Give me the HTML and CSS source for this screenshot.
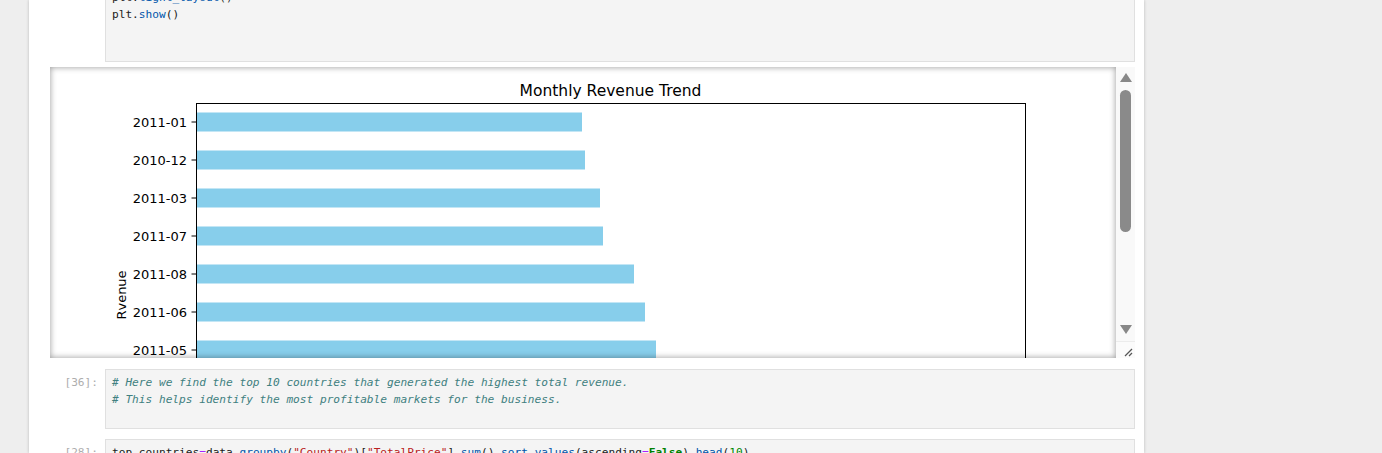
FILE: index.html
```html
<!DOCTYPE html>
<html>
<head>
<meta charset="utf-8">
<link rel="stylesheet" href="styles.css">
</head>
<body>
<div class="notebook">
  <div class="cell cell-first">
    <div class="prompt"></div>
    <div class="input input-first"><pre class="code">plt.<span class="pr">tight_layout</span>()
plt.<span class="pr">show</span>()</pre></div>
  </div>

  <div class="output">
    <div class="output-view">
      <svg class="chart" width="1066" height="291" viewBox="0 0 1066 291" xmlns="http://www.w3.org/2000/svg">
        <rect x="0" y="0" width="1066" height="291" fill="#ffffff"/>
        <text class="title" x="560.5" y="29" text-anchor="middle">Monthly Revenue Trend</text>
        <g fill="#87ceeb">
          <rect x="146.5" y="45.5" width="385.5" height="19"/>
          <rect x="146.5" y="83.5" width="388.5" height="19"/>
          <rect x="146.5" y="121.5" width="403.5" height="19"/>
          <rect x="146.5" y="159.5" width="406.5" height="19"/>
          <rect x="146.5" y="197.5" width="437.5" height="19"/>
          <rect x="146.5" y="235.5" width="448.5" height="19"/>
          <rect x="146.5" y="273.5" width="459.5" height="19"/>
        </g>
        <g stroke="#000" stroke-width="1">
          <line x1="146.5" y1="36.5" x2="146.5" y2="300"/>
          <line x1="146" y1="36.5" x2="976" y2="36.5"/>
          <line x1="975.5" y1="36.5" x2="975.5" y2="300"/>
          <line x1="141.5" y1="55" x2="146.5" y2="55"/>
          <line x1="141.5" y1="93" x2="146.5" y2="93"/>
          <line x1="141.5" y1="131" x2="146.5" y2="131"/>
          <line x1="141.5" y1="169" x2="146.5" y2="169"/>
          <line x1="141.5" y1="207" x2="146.5" y2="207"/>
          <line x1="141.5" y1="245" x2="146.5" y2="245"/>
          <line x1="141.5" y1="283" x2="146.5" y2="283"/>
        </g>
        <g class="tick" text-anchor="end">
          <text x="137" y="59.7">2011-01</text>
          <text x="137" y="97.7">2010-12</text>
          <text x="137" y="135.7">2011-03</text>
          <text x="137" y="173.7">2011-07</text>
          <text x="137" y="211.7">2011-08</text>
          <text x="137" y="249.7">2011-06</text>
          <text x="137" y="287.7">2011-05</text>
        </g>
        <text class="tick" x="0" y="0" text-anchor="middle" transform="translate(75.5 228) rotate(-90)">Rvenue</text>
      </svg>
    </div>
    <div class="scrollbar">
      <div class="sb-btn sb-up"><span class="tri-up"></span></div>
      <div class="sb-track"><div class="sb-thumb"></div></div>
      <div class="sb-btn sb-down"><span class="tri-down"></span></div>
      <div class="resizer">
        <svg width="19" height="17" viewBox="0 0 19 17" xmlns="http://www.w3.org/2000/svg">
          <line x1="9" y1="15" x2="16" y2="8" stroke="#555" stroke-width="1.2"/>
          <line x1="13" y1="15" x2="16" y2="12" stroke="#555" stroke-width="1.2"/>
        </svg>
      </div>
    </div>
  </div>

  <div class="cell cell-second">
    <div class="prompt">[36]:</div>
    <div class="input"><pre class="code"><span class="cm"># Here we find the top 10 countries that generated the highest total revenue.</span>
<span class="cm"># This helps identify the most profitable markets for the business.</span></pre></div>
  </div>

  <div class="cell cell-third">
    <div class="prompt">[28]:</div>
    <div class="input"><pre class="code">top_countries<span class="op">=</span>data.<span class="pr">groupby</span>(<span class="st">"Country"</span>)[<span class="st">"TotalPrice"</span>].<span class="pr">sum</span>().<span class="pr">sort_values</span>(ascending<span class="op">=</span><span class="kw">False</span>).<span class="pr">head</span>(<span class="nu">10</span>)</pre></div>
  </div>
</div>
</body>
</html>
```
FILE: styles.css
```css
html, body {
  margin: 0;
  padding: 0;
}
body {
  background: #eeeeee;
  width: 1382px;
  height: 453px;
  overflow: hidden;
}
.notebook {
  margin-left: 29px;
  width: 1115px;
  height: 453px;
  overflow: hidden;
  background: #ffffff;
  box-shadow: 0 0 3px rgba(0, 0, 0, 0.22);
}
.cell {
  display: flex;
  padding-right: 9px;
}
.cell-first {
  margin-top: -16px;
}
.cell-second {
  margin-top: 11px;
}
.cell-third {
  margin-top: 10px;
}
.prompt {
  width: 69px;
  flex: none;
  padding-right: 7px;
  padding-top: 5px;
  text-align: right;
  font-family: "DejaVu Sans Mono", monospace;
  font-size: 11.15px;
  line-height: 17px;
  color: #adadad;
}
.input {
  flex: 1;
  background: #f4f4f4;
  border: 1px solid #e0e0e0;
  padding: 4px 6px 20px 6px;
}
.input-first {
  padding-bottom: 38px;
}
.code {
  margin: 0;
  font-family: "DejaVu Sans Mono", monospace;
  font-size: 11.15px;
  line-height: 17px;
  color: #212121;
  white-space: pre;
}
.pr { color: #0055aa; }
.st { color: #ba2121; }
.op { color: #aa22ff; }
.kw { color: #008000; font-weight: bold; }
.nu { color: #008800; }
.cm { color: #408080; font-style: italic; }

.output {
  display: flex;
  margin-top: 5px;
  margin-left: 21px;
  margin-right: 9px;
  height: 291px;
}
.output-view {
  position: relative;
  width: 1066px;
  height: 291px;
  overflow: hidden;
  background: #ffffff;
}
.output-view::after {
  content: "";
  position: absolute;
  left: 0;
  top: 0;
  right: 0;
  bottom: 0;
  box-shadow: inset 0 0 6px rgba(0, 0, 0, 0.42);
  pointer-events: none;
}
.chart {
  display: block;
}
.chart .title {
  font-family: "DejaVu Sans", sans-serif;
  font-size: 15.5px;
  fill: #000;
}
.chart .tick {
  font-family: "DejaVu Sans", sans-serif;
  font-size: 13px;
  fill: #000;
}
.scrollbar {
  width: 19px;
  flex: none;
  display: flex;
  flex-direction: column;
  background: #f9f9f9;
}
.sb-btn {
  height: 19px;
  display: flex;
  justify-content: center;
  box-sizing: border-box;
}
.sb-up {
  padding-top: 6px;
}
.sb-down {
  padding-top: 3px;
}
.tri-up, .tri-down {
  width: 0;
  height: 0;
  border-left: 6px solid transparent;
  border-right: 6px solid transparent;
}
.tri-up {
  border-bottom: 9px solid #888888;
}
.tri-down {
  border-top: 9px solid #888888;
}
.sb-track {
  height: 236px;
  display: flex;
  justify-content: center;
  padding-top: 4px;
  box-sizing: border-box;
}
.sb-thumb {
  width: 11px;
  height: 142px;
  border-radius: 6px;
  background: #8a8a8a;
}
.resizer {
  height: 17px;
  background: #fbfbfb;
  border-top: 1px solid #ececec;
  box-sizing: border-box;
}
.resizer svg {
  display: block;
  margin-top: -1px;
}
```
